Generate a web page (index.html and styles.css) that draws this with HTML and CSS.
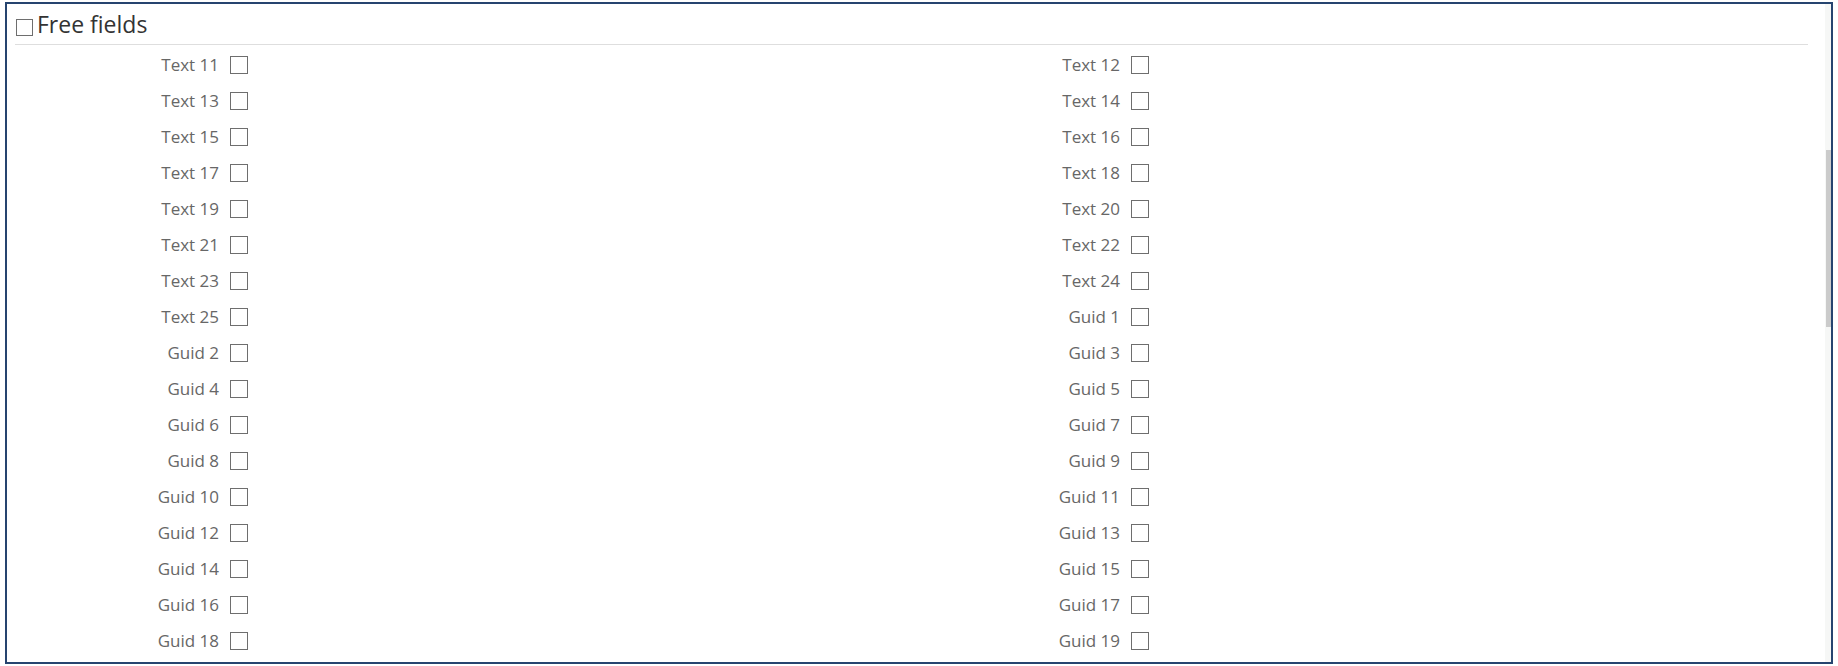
FILE: index.html
```html
<!DOCTYPE html>
<html lang="en">
<head>
<meta charset="utf-8">
<title>Free fields</title>
<link rel="stylesheet" href="styles.css">
</head>
<body>
<div class="panel">
  <div class="scroller">
    <div class="header">
      <input type="checkbox" class="cb cb-head">
      <span class="title">Free fields</span>
    </div>
    <div class="grid">
      <div class="field"><label>Text 11</label><input type="checkbox" class="cb"></div>
      <div class="field"><label>Text 12</label><input type="checkbox" class="cb"></div>
      <div class="field"><label>Text 13</label><input type="checkbox" class="cb"></div>
      <div class="field"><label>Text 14</label><input type="checkbox" class="cb"></div>
      <div class="field"><label>Text 15</label><input type="checkbox" class="cb"></div>
      <div class="field"><label>Text 16</label><input type="checkbox" class="cb"></div>
      <div class="field"><label>Text 17</label><input type="checkbox" class="cb"></div>
      <div class="field"><label>Text 18</label><input type="checkbox" class="cb"></div>
      <div class="field"><label>Text 19</label><input type="checkbox" class="cb"></div>
      <div class="field"><label>Text 20</label><input type="checkbox" class="cb"></div>
      <div class="field"><label>Text 21</label><input type="checkbox" class="cb"></div>
      <div class="field"><label>Text 22</label><input type="checkbox" class="cb"></div>
      <div class="field"><label>Text 23</label><input type="checkbox" class="cb"></div>
      <div class="field"><label>Text 24</label><input type="checkbox" class="cb"></div>
      <div class="field"><label>Text 25</label><input type="checkbox" class="cb"></div>
      <div class="field"><label>Guid 1</label><input type="checkbox" class="cb"></div>
      <div class="field"><label>Guid 2</label><input type="checkbox" class="cb"></div>
      <div class="field"><label>Guid 3</label><input type="checkbox" class="cb"></div>
      <div class="field"><label>Guid 4</label><input type="checkbox" class="cb"></div>
      <div class="field"><label>Guid 5</label><input type="checkbox" class="cb"></div>
      <div class="field"><label>Guid 6</label><input type="checkbox" class="cb"></div>
      <div class="field"><label>Guid 7</label><input type="checkbox" class="cb"></div>
      <div class="field"><label>Guid 8</label><input type="checkbox" class="cb"></div>
      <div class="field"><label>Guid 9</label><input type="checkbox" class="cb"></div>
      <div class="field"><label>Guid 10</label><input type="checkbox" class="cb"></div>
      <div class="field"><label>Guid 11</label><input type="checkbox" class="cb"></div>
      <div class="field"><label>Guid 12</label><input type="checkbox" class="cb"></div>
      <div class="field"><label>Guid 13</label><input type="checkbox" class="cb"></div>
      <div class="field"><label>Guid 14</label><input type="checkbox" class="cb"></div>
      <div class="field"><label>Guid 15</label><input type="checkbox" class="cb"></div>
      <div class="field"><label>Guid 16</label><input type="checkbox" class="cb"></div>
      <div class="field"><label>Guid 17</label><input type="checkbox" class="cb"></div>
      <div class="field"><label>Guid 18</label><input type="checkbox" class="cb"></div>
      <div class="field"><label>Guid 19</label><input type="checkbox" class="cb"></div>
    </div>
  </div>
  <div class="scrollbar"><div class="thumb"></div></div>
</div>
</body>
</html>
```
FILE: styles.css
```css
html, body {
  margin: 0;
  background: #ffffff;
}
body {
  padding: 2px 5px;
  font-family: "Open Sans", "Liberation Sans", sans-serif;
}
.panel {
  display: flex;
  height: 662px;
  box-sizing: border-box;
  border: 2px solid #26446f;
  overflow: hidden;
}
.scroller {
  flex: 1;
  overflow: hidden;
  padding: 0 17px 0 8px;
}
.header {
  height: 40px;
  display: flex;
  align-items: center;
  border-bottom: 1px solid #dedede;
}
.cb {
  -webkit-appearance: none;
  appearance: none;
  margin: 0;
  width: 18px;
  height: 18px;
  box-sizing: border-box;
  border: 1px solid #6e6e6e;
  background: #ffffff;
  flex: none;
}
.cb-head {
  width: 17px;
  height: 17px;
  margin: 7px 0 0 1px;
}
.title {
  margin-left: 4px;
  font-size: 23px;
  color: #333333;
}
.grid {
  display: grid;
  grid-template-columns: 901px 1fr;
  grid-auto-rows: 36px;
  padding-top: 2px;
}
.field {
  display: flex;
  align-items: center;
}
.field label {
  width: 204px;
  margin-right: 11px;
  padding-bottom: 2px;
  text-align: right;
  font-size: 17px;
  color: #676767;
}
.scrollbar {
  width: 6px;
  flex: none;
  background: #f6f7f6;
  display: flex;
  justify-content: flex-end;
}
.thumb {
  width: 5px;
  height: 177px;
  margin-top: 146px;
  background: #cbcbcb;
}
```
